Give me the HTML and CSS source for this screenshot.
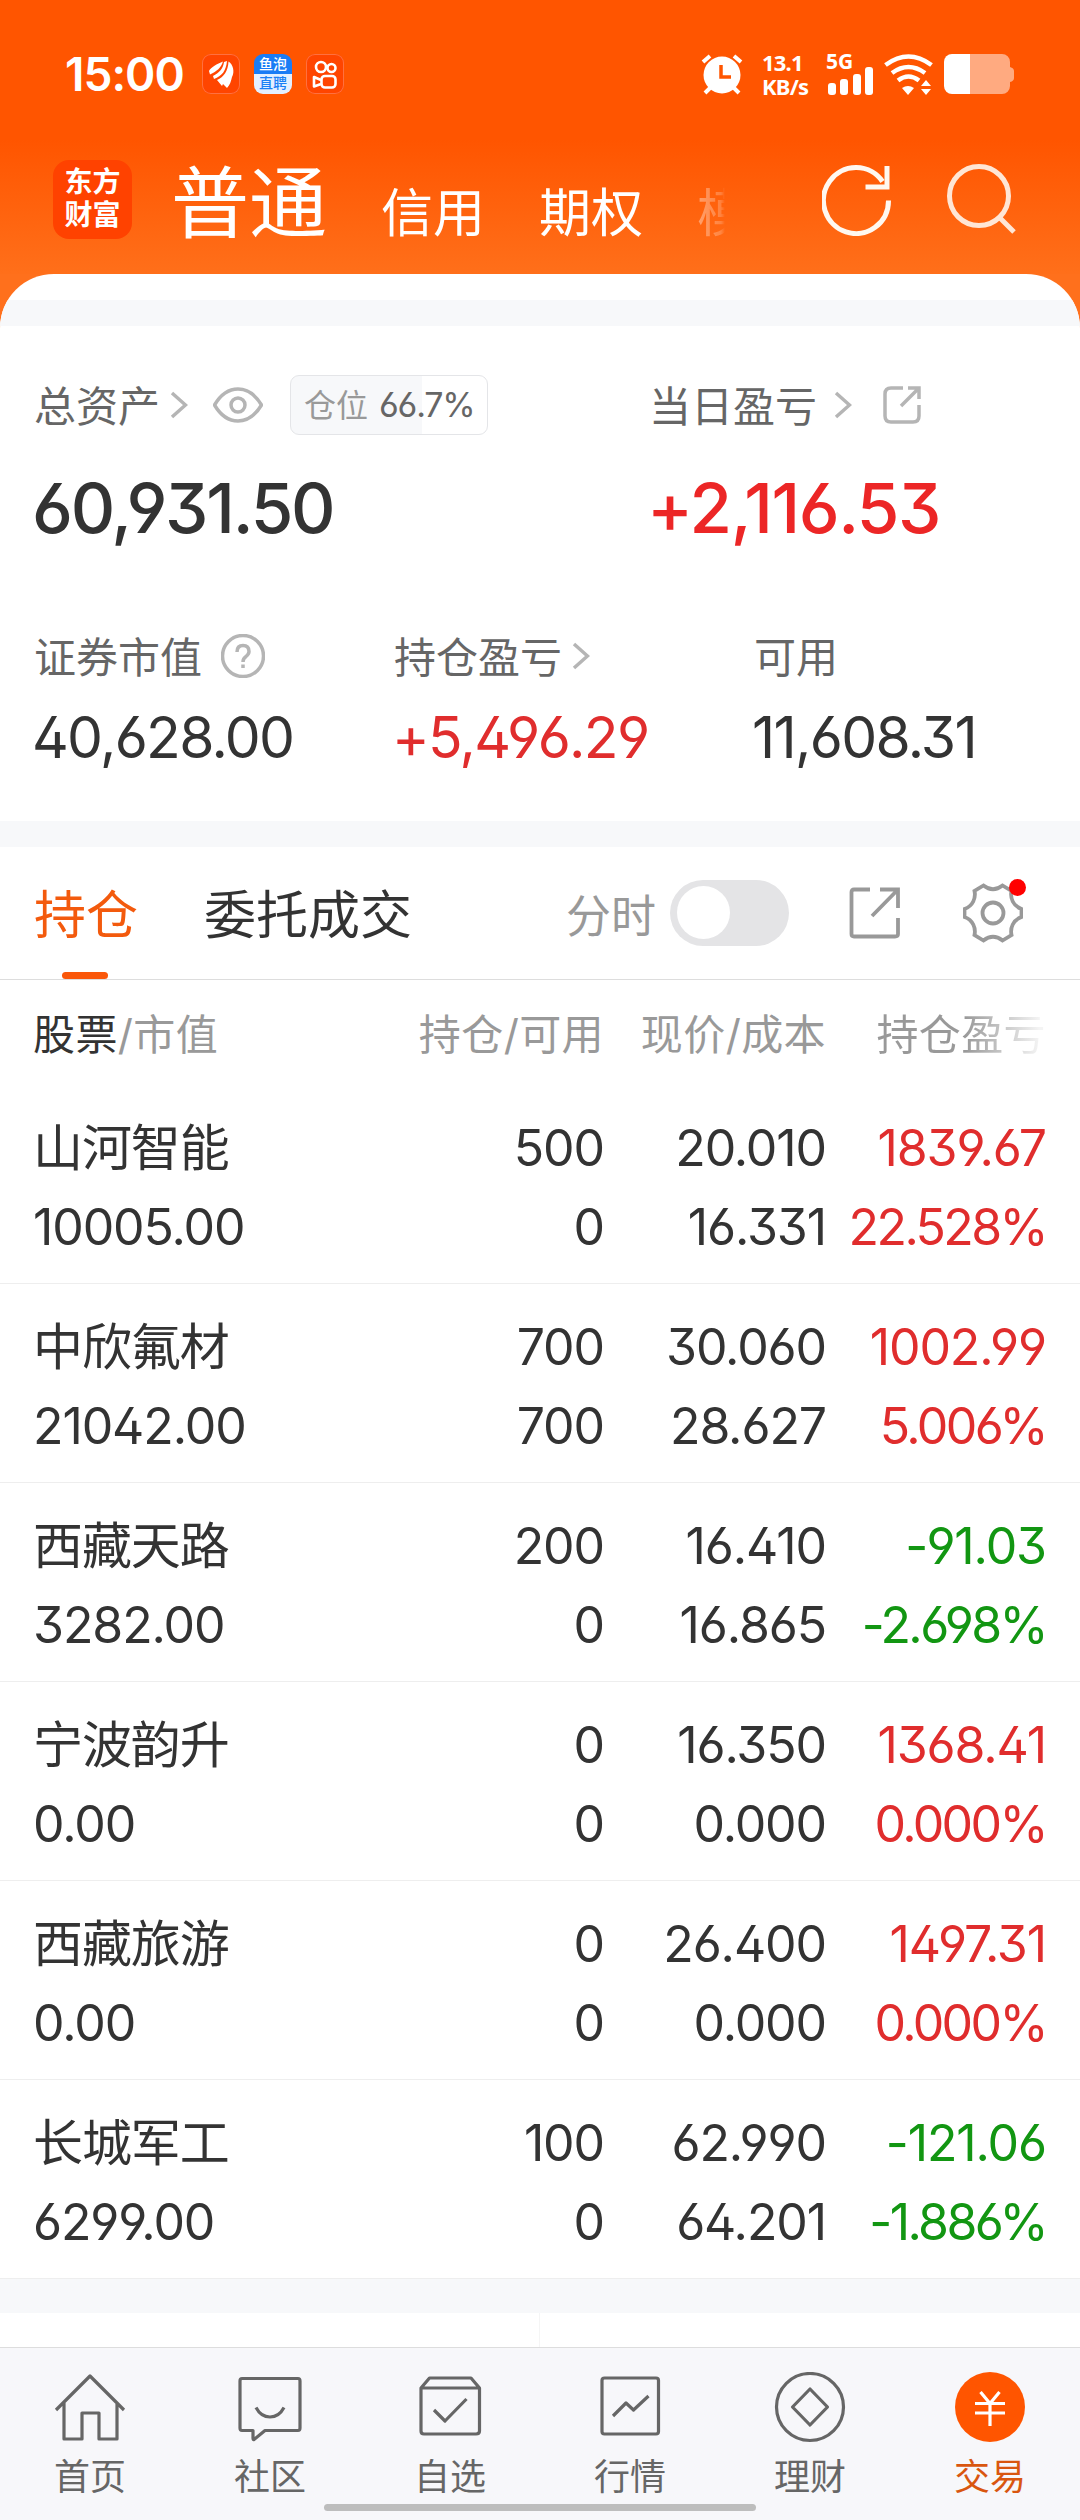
FILE: index.html
```html
<!DOCTYPE html>
<html lang="zh-CN">
<head>
  <meta charset="UTF-8" />
  <meta name="viewport" content="width=device-width, initial-scale=1.0"/>
  <title>东方财富 - 交易</title>
  <link rel="stylesheet" href="styles.css">
</head>
<body>

<header class="top">
  <div class="status-bar">
    <span class="time">15:00</span>
    <span class="app-icon">
      <svg width="38" height="40" viewBox="0 0 38 40" fill="#fff"><path d="M7 17C9 13 15 10 21 7.500C19 14 15 17 8 20.500ZM22 8L25 7C24 17 20 22 12 25L11 22C17 19 21 15 22 8ZM26.500 7.500C31 10 33 18 30 23C29 27 28 31 25 34L21 30L20 32L15 26C22 23 26 17 26.500 7.500Z"/></svg>
    </span>
    <span class="app-icon yupao"><b>鱼泡</b><i>直聘</i></span>
    <span class="app-icon">
      <svg width="38" height="40" viewBox="0 0 38 40" fill="none" stroke="#fff" stroke-width="2.600"><circle cx="15" cy="13" r="5"/><circle cx="25.500" cy="14" r="4"/><rect x="15.500" y="22" width="14" height="11.500" rx="3.500"/><path d="M15 26L8 23V32.500L15 30" stroke-linejoin="round"/></svg>
    </span>

    <svg class="alarm" width="42" height="42" viewBox="0 0 42 42"><circle cx="21" cy="22" r="18.500" fill="#fff"/><path d="M2 9L9 3M40 9L33 3M9 35L4 40M33 35L38 40" stroke="#fff" stroke-width="4"/><path d="M20 12V24H30" fill="none" stroke="#ff5500" stroke-width="3.500"/></svg>
    <span class="speed">13.1<br>KB/s</span>
    <span class="signal">
      <b>5G</b>
      <svg width="46" height="28" viewBox="0 0 46 28" fill="#fff"><rect x="0" y="16" width="8" height="12" rx="3"/><rect x="12" y="12" width="8" height="16" rx="3"/><rect x="25" y="7" width="8" height="21" rx="3"/><rect x="37" y="0" width="8" height="28" rx="3"/></svg>
    </span>
    <svg class="wifi" width="50" height="41" viewBox="0 0 50 41"><path d="M1.500 11Q24.500-6 47.500 11M8 19Q24.500 7 41 19M14 26.500Q24.500 18.500 35 26.500" fill="none" stroke="#fff" stroke-width="4.500"/><path d="M18 34Q24 30 30 34L24 41ZM37 32L42 26L47 32ZM37 35L42 41L47 35Z" fill="#fff"/></svg>
    <svg class="battery" width="70" height="40" viewBox="0 0 70 40"><path d="M26 0H58A8 8 0 0 1 66 8V13Q70 14 70 17V24Q70 27 66 28V32A8 8 0 0 1 58 40H26Z" fill="#ffaa80"/><path d="M8 0H26V40H8A8 8 0 0 1 0 32V8A8 8 0 0 1 8 0Z" fill="#fff"/></svg>
  </div>

  <div class="nav-bar">
    <div class="logo">东方<br>财富</div>
    <nav class="accounts">
      <a class="current">普通</a>
      <a>信用</a>
      <a>期权</a>
      <a class="fading">模</a>
    </nav>
    <svg class="refresh" width="72" height="74" viewBox="0 0 72 74" fill="none" stroke="#fff8f0" stroke-width="5"><path d="M66.500 38.500A32.500 33 0 1 1 60.500 19.500"/><path d="M65 4V25H43.500"/></svg>
    <svg class="search" width="72" height="74" viewBox="0 0 72 74" fill="none" stroke="#ffe6d5" stroke-width="5"><circle cx="34" cy="34" r="29.500"/><path d="M54 55L69 70"/></svg>
  </div>
</header>

<main class="sheet">
  <div class="strip"></div>

  <section class="assets">
    <div class="assets-main">
      <div>
        <div class="label">
          <span>总资产</span>
          <svg class="chevron" width="18" height="28" viewBox="0 0 18 28"><path d="M2 2L15.500 14L2 26"/></svg>
          <svg class="eye" width="50" height="36" viewBox="0 0 50 36"><path d="M1.500 18Q11 2 25 2T48.500 18Q39 34 25 34T1.500 18Z"/><circle cx="25" cy="18" r="7"/></svg>
          <div class="position">仓位 <b>66.7%</b></div>
        </div>
        <div class="total">60,931.50</div>
      </div>
      <div>
        <div class="label">
          <span>当日盈亏</span>
          <svg class="chevron wide" width="18" height="28" viewBox="0 0 18 28"><path d="M2 2L15.500 14L2 26"/></svg>
          <svg class="share" width="38" height="38" viewBox="0 0 38 38"><path d="M20 2H8Q2 2 2 8V30Q2 36 8 36H30Q36 36 36 30V19M25 2H36V13M36 2L18 20"/></svg>
        </div>
        <div class="total up">+2,116.53</div>
      </div>
    </div>
    <div class="assets-sub">
      <div>
        <div class="label">
          <span>证券市值</span>
          <svg class="help" width="44" height="44" viewBox="0 0 44 44"><circle cx="22" cy="22" r="20.500"/><path d="M16 18Q16 11.500 22 11.500T28 17.500Q28 20 25 22.500Q22 24.500 22 28M22 30.500V34"/></svg>
        </div>
        <div class="value">40,628.00</div>
      </div>
      <div>
        <div class="label">
          <span>持仓盈亏</span>
          <svg class="chevron" width="18" height="28" viewBox="0 0 18 28"><path d="M2 2L15.500 14L2 26"/></svg>
        </div>
        <div class="value up">+5,496.29</div>
      </div>
      <div>
        <div class="label"><span>可用</span></div>
        <div class="value">11,608.31</div>
      </div>
    </div>
  </section>

  <div class="strip"></div>

  <section class="holdings">
    <div class="tabs">
      <a class="tab active">持仓</a>
      <a class="tab">委托成交</a>
      <span class="switch-label">分时</span>
      <span class="switch"></span>
      <svg class="share-big" width="52" height="52" viewBox="0 0 52 52"><path d="M21 2.500H5Q2.500 2.500 2.500 5V47Q2.500 49.500 5 49.500H46Q49 49.500 49 47V31M31 2.500H49V21M49 2.500L23 29"/></svg>
      <span class="settings">
        <svg width="60" height="60" viewBox="0 0 60 60"><path d="M20.500 2.500Q30 10 39.500 2.500L48.500 8C47 15 50 23 58.500 26V34C50 37 47 45 48.500 52L39.500 57.500Q30 50 20.500 57.500L11.500 52C13 45 10 37 1.500 34V26C10 23 13 15 11.500 8Z"/><circle cx="30" cy="30" r="10.500"/></svg>
      </span>
    </div>

    <div class="row head">
      <div><b>股票</b>/市值</div>
      <div>持仓/可用</div>
      <div>现价/成本</div>
      <div class="clipped">持仓盈亏</div>
    </div>
    <div class="row">
      <div>山河智能<br>10005.00</div>
      <div>500<br>0</div>
      <div>20.010<br>16.331</div>
      <div class="up">1839.67<br><b>22.528%</b></div>
    </div>
    <div class="row">
      <div>中欣氟材<br>21042.00</div>
      <div>700<br>700</div>
      <div>30.060<br>28.627</div>
      <div class="up">1002.99<br><b>5.006%</b></div>
    </div>
    <div class="row">
      <div>西藏天路<br>3282.00</div>
      <div>200<br>0</div>
      <div>16.410<br>16.865</div>
      <div class="down">-91.03<br><b>-2.698%</b></div>
    </div>
    <div class="row">
      <div>宁波韵升<br>0.00</div>
      <div>0<br>0</div>
      <div>16.350<br>0.000</div>
      <div class="up">1368.41<br><b>0.000%</b></div>
    </div>
    <div class="row">
      <div>西藏旅游<br>0.00</div>
      <div>0<br>0</div>
      <div>26.400<br>0.000</div>
      <div class="up">1497.31<br><b>0.000%</b></div>
    </div>
    <div class="row">
      <div>长城军工<br>6299.00</div>
      <div>100<br>0</div>
      <div>62.990<br>64.201</div>
      <div class="down">-121.06<br><b>-1.886%</b></div>
    </div>
  </section>

  <div class="strip tall"></div>
  <div class="next-block"><span></span></div>
</main>

<footer class="bottom">
  <nav class="menu">
    <a>
      <svg width="72" height="72" viewBox="0 0 72 72"><path d="M2 38L36 4L70 38M10 31V67H28V41H45V67H63V31"/></svg>
      首页
    </a>
    <a>
      <svg width="72" height="72" viewBox="0 0 72 72"><path d="M8 6.500H64Q66 6.500 66 9V56Q66 58.500 64 58.500H31L20 67.500Q19 68 19 66V58.500H8Q6 58.500 6 56V9Q6 6.500 8 6.500Z"/><path d="M22 35.500Q27 45 36 45T50 35.500"/></svg>
      社区
    </a>
    <a>
      <svg width="72" height="72" viewBox="0 0 72 72"><path d="M7 16L15.500 6H57L65.500 16V59Q65.500 62 62 62H10Q7 62 7 59ZM7 16H65.500M20 38L31 49L52.500 27"/></svg>
      自选
    </a>
    <a>
      <svg width="72" height="72" viewBox="0 0 72 72"><rect x="8" y="6" width="56.500" height="56" rx="2.500"/><path d="M19 44L32 31L39.500 38L54.500 24"/></svg>
      行情
    </a>
    <a>
      <svg width="72" height="72" viewBox="0 0 72 72"><circle cx="36" cy="35" r="33.500"/><path d="M36 17L53.500 35L36 53L18.500 35Z"/></svg>
      理财
    </a>
    <a class="active">
      <svg width="72" height="72" viewBox="0 0 72 72"><circle class="disc" cx="36" cy="35" r="35"/><path class="yen" d="M26.500 20L36 31.500L45.500 20M21 31.500H51M21 41H51M36 31.500V54"/></svg>
      交易
    </a>
  </nav>
  <div class="home-bar"></div>
</footer>

</body>
</html>
```

FILE: styles.css
```css
* {
  box-sizing: border-box;
}

body {
  margin: 0;
  width: 1080px;
  height: 2520px;
  display: flex;
  flex-direction: column;
  overflow: hidden;
  font-family: Inter, "Noto Sans CJK SC", sans-serif;
  font-feature-settings: "ss01";
  color: #333;
  background: #ff701c;
}

b, i {
  font-weight: inherit;
  font-style: normal;
}

svg {
  display: block;
  flex: none;
}

/* header */
.top {
  height: 274px;
  color: #fff;
  background: linear-gradient(#ff5500 140px, #ff6f1a 273px);
}

.status-bar {
  display: flex;
  align-items: center;
  height: 148px;
  padding-left: 65px;
}

.time {
  width: 137px;
  font-size: 46px;
  font-weight: 600;
  letter-spacing: -1px;
}

.app-icon {
  width: 38px;
  height: 40px;
  margin-right: 14px;
  border-radius: 9px;
  background: #ff4500;
  box-shadow: inset 0 0 0 1px #ff7040;
  overflow: hidden;
}

.yupao {
  background: linear-gradient(#1a7cf5 50%, #e4f0ff 50%);
  box-shadow: none;
  font-size: 14px;
  font-weight: 500;
  line-height: 19px;
  text-align: center;
}

.yupao b, .yupao i {
  display: block;
}

.yupao i {
  color: #1a80f5;
}

.alarm {
  margin-left: 343px;
}

.speed, .signal {
  font-family: "Noto Sans", sans-serif;
  font-weight: 700;
}

.speed {
  width: 64px;
  margin-left: 19px;
  font-size: 22px;
  line-height: 24px;
  letter-spacing: -.8px;
}

.signal {
  width: 58px;
  height: 42px;
}

.signal b {
  display: block;
  font-size: 21px;
  line-height: 16px;
}

.signal svg {
  margin: -2px 0 0 2px;
}

.battery {
  margin-left: 10px;
}

.nav-bar {
  display: flex;
  align-items: flex-start;
  padding: 12px 0 0 53px;
}

.logo {
  width: 79px;
  height: 79px;
  padding-top: 6px;
  border-radius: 16px;
  background: #ff4200;
  font-size: 28px;
  font-weight: 700;
  line-height: 33px;
  text-align: center;
}

.accounts {
  display: flex;
  align-items: baseline;
  width: 690px;
  padding-left: 39px;
  font-size: 52px;
  line-height: 88px;
  white-space: nowrap;
}

.accounts a {
  margin-right: 54px;
}

.accounts .current {
  font-size: 78px;
}

/* the last account fades out under the icons */
.accounts .fading {
  color: transparent;
  background: linear-gradient(90deg, rgba(255, 255, 255, .4), rgba(255, 255, 255, .2) 24px, transparent 28px);
  -webkit-background-clip: text;
  background-clip: text;
}

.refresh, .search {
  margin-top: 2px;
}

.search {
  margin-left: 51px;
}

/* white sheet */
.sheet {
  flex: none;
  height: 2073px;
  padding-top: 26px;
  border-radius: 54px 54px 0 0;
  background: #fff;
  overflow: hidden;
}

.strip {
  height: 26px;
  background: #f7f8fa;
}

.strip.tall {
  height: 34px;
}

.assets {
  height: 495px;
  padding: 49px 34px 0;
}

.label {
  display: flex;
  align-items: center;
  height: 60px;
  font-size: 42px;
  color: #666;
}

.label > span {
  padding-bottom: 4px;
}

.label svg {
  fill: none;
  stroke: #b5b5b5;
  stroke-width: 3.500;
}

.assets-main {
  display: grid;
  grid-template-columns: 615px 1fr;
  height: 251px;
}

.assets-sub {
  display: grid;
  grid-template-columns: 360px 360px 1fr;
}

.chevron {
  margin-left: 10px;
}

.chevron.wide {
  margin-left: 17px;
}

.eye {
  margin: 0 27px 0 25px;
}

.share {
  margin-left: 31px;
}

.help {
  margin-left: 19px;
}

.position {
  width: 198px;
  height: 60px;
  padding-left: 13px;
  border: 1px solid #e4e5e8;
  border-radius: 9px;
  background: linear-gradient(90deg, #f7f8fa 67%, #fff 67%);
  font-size: 32px;
  line-height: 58px;
  color: #999;
  white-space: nowrap;
}

.position b {
  margin-left: 2px;
  font-size: 34px;
  letter-spacing: -1.2px;
  color: #666;
}

.total {
  height: 146px;
  margin-left: -2px;
  line-height: 147px;
  font-size: 69px;
  font-weight: 500;
  letter-spacing: -2.2px;
}

.value {
  height: 102px;
  margin-left: -2px;
  line-height: 103px;
  font-size: 57px;
  letter-spacing: -1.7px;
}

.up {
  color: #e02d2d;
}

.total.up {
  color: #ec2626;
  letter-spacing: -1.4px;
}

.down {
  color: #129612;
}

/* holdings */
.tabs {
  display: flex;
  align-items: center;
  height: 133px;
  padding: 0 56px 0 34px;
  border-bottom: 1px solid #ddd;
}

.tab {
  position: relative;
  height: 132px;
  margin-right: 66px;
  font-size: 52px;
  line-height: 137px;
}

.tab.active {
  color: #f35a0d;
}

.tab.active::after {
  content: "";
  position: absolute;
  left: 28px;
  bottom: 0;
  width: 46px;
  height: 7px;
  border-radius: 4px;
  background: #fa570a;
}

.switch-label {
  margin-left: 88px;
  font-size: 45px;
  color: #999;
}

.switch {
  width: 119px;
  height: 66px;
  margin-left: 14px;
  padding: 6px 7px;
  border-radius: 33px;
  background: #e4e4e6;
}

.switch::before {
  content: "";
  display: block;
  width: 53px;
  height: 53px;
  border-radius: 50%;
  background: #fff;
}

.share-big {
  margin-left: 60px;
}

.settings {
  position: relative;
  margin-left: 62px;
}

.settings::after {
  content: "";
  position: absolute;
  top: -4px;
  right: -3px;
  width: 17px;
  height: 17px;
  border-radius: 50%;
  background: #f00;
}

.share-big, .settings svg {
  fill: none;
  stroke: #999;
  stroke-width: 3.800;
}

.row {
  display: grid;
  grid-template-columns: 271px 300px 222px 220px;
  height: 199px;
  padding: 24px 33px 0;
  border-bottom: 1px solid #eee;
  font-size: 50px;
  line-height: 79px;
  letter-spacing: -1.1px;
  text-align: right;
}

.row div:first-child {
  text-align: left;
}

/* percentages run tighter to stay inside the column */
.up b, .down b {
  letter-spacing: -2.6px;
}

.row.head {
  height: 105px;
  padding-top: 15px;
  border: none;
  font-size: 42px;
  letter-spacing: .4px;
  color: #999;
}

.head b {
  color: #333;
}

.head .clipped {
  color: transparent;
  background: linear-gradient(90deg, #999 63%, #f4f4f4 97%);
  -webkit-background-clip: text;
  background-clip: text;
}

.next-block {
  height: 34px;
}

.next-block span {
  display: block;
  width: 540px;
  height: 100%;
  border-right: 1px solid #f5f5f5;
}

/* bottom menu */
.bottom {
  flex: 1;
  border-top: 1px solid #ddd;
  background: #f7f7fa;
}

.menu {
  display: grid;
  grid-template-columns: repeat(6, 1fr);
  height: 156px;
  padding-top: 24px;
}

.menu a {
  display: flex;
  flex-direction: column;
  align-items: center;
  font-size: 36px;
  line-height: 67px;
  color: #666;
}

.menu svg {
  fill: none;
  stroke: #666;
  stroke-width: 3.200;
  stroke-linejoin: round;
}

.menu .active {
  color: #d9560f;
}

.menu .disc {
  fill: #ff5500;
  stroke: none;
}

.menu .yen {
  stroke: #fff;
}

.home-bar {
  width: 432px;
  height: 7px;
  margin: 0 auto;
  border-radius: 4px;
  background: #bdbdbd;
}
```
